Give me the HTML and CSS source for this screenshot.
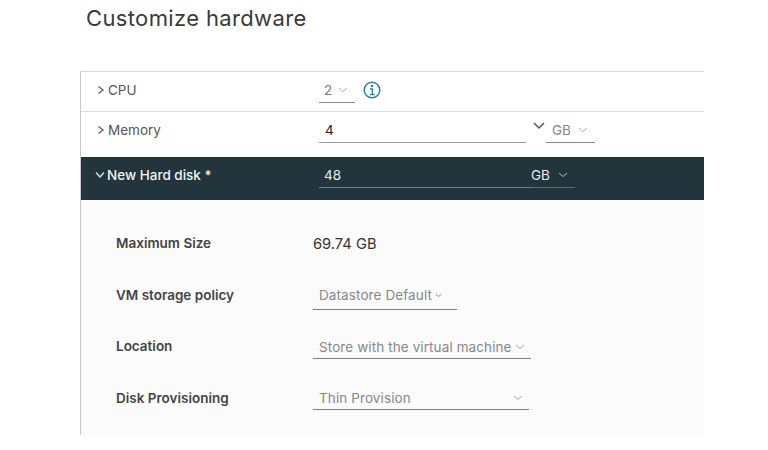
FILE: index.html
```html
<!DOCTYPE html>
<html lang="en">
<head>
<meta charset="utf-8">
<title>Customize hardware</title>
<link rel="stylesheet" href="styles.css">
</head>
<body>
<main class="page">
  <h1 class="title">Customize hardware</h1>
  <section class="panel">
    <div class="row row-cpu">
      <div class="label">
        <svg class="caret" viewBox="0 0 8 10"><path d="M1.5 1.5 6 5 1.5 8.5"/></svg>
        <span>CPU</span>
      </div>
      <div class="select select-cpu"><span>2</span><svg class="chev" viewBox="0 0 10 6"><path d="M1 1l4 3.5L9 1"/></svg></div>
      <svg class="info" viewBox="0 0 20 20"><circle cx="10" cy="10" r="7.8"/><circle class="dot" cx="10" cy="6" r="1.2"/><path d="M8 9h2.4v5.4M7.8 14.6h5"/></svg>
    </div>
    <div class="row row-mem">
      <div class="label">
        <svg class="caret" viewBox="0 0 8 10"><path d="M1.5 1.5 6 5 1.5 8.5"/></svg>
        <span>Memory</span>
      </div>
      <div class="input input-mem">4</div>
      <svg class="spin" viewBox="0 0 12 8"><path d="M1 1l5 5 5-5"/></svg>
      <div class="select select-unit"><span>GB</span><svg class="chev" viewBox="0 0 10 6"><path d="M1 1l4 3.5L9 1"/></svg></div>
    </div>
    <div class="row row-disk">
      <div class="label">
        <svg class="caret-down" viewBox="0 0 10 8"><path d="M1 1.5 5 6l4-4.5"/></svg>
        <span>New Hard disk *</span>
      </div>
      <div class="input input-disk">48</div>
      <div class="select select-disk"><span>GB</span><svg class="chev" viewBox="0 0 10 6"><path d="M1 1l4 3.5L9 1"/></svg></div>
    </div>
    <div class="details">
      <div class="detail detail-size">
        <div class="name">Maximum Size</div>
        <div class="value">69.74 GB</div>
      </div>
      <div class="detail">
        <div class="name">VM storage policy</div>
        <div class="field field-policy"><span>Datastore Default</span><svg class="chev-small" viewBox="0 0 10 6"><path d="M1 1l4 3.5L9 1"/></svg></div>
      </div>
      <div class="detail">
        <div class="name">Location</div>
        <div class="field field-location"><span>Store with the virtual machine</span><svg class="chev" viewBox="0 0 10 6"><path d="M1 1l4 3.5L9 1"/></svg></div>
      </div>
      <div class="detail">
        <div class="name">Disk Provisioning</div>
        <div class="field field-prov"><span>Thin Provision</span><svg class="chev" viewBox="0 0 10 6"><path d="M1 1l4 3.5L9 1"/></svg></div>
      </div>
    </div>
  </section>
</main>
</body>
</html>
```
FILE: styles.css
```css
* { box-sizing: border-box; }
html, body { margin: 0; background: #fff; }
body { width: 768px; height: 450px; overflow: hidden; font-family: Inter, "Liberation Sans", sans-serif; color: #444; }
.page { padding: 4px 64px 0 80px; }
.title { margin: 0 0 38px 6px; height: 29px; font-size: 22px; line-height: 29px; font-weight: 400; color: #3a3a3a; letter-spacing: 0.36px; }
.panel { height: 364px; border-top: 1px solid #d9d9d9; border-left: 1px solid #c8c8c8; display: flex; flex-direction: column; }
.row { display: flex; align-items: flex-start; flex: none; font-size: 13.5px; }
.row-cpu { height: 40px; border-bottom: 1px solid #dcdcdc; }
.row-mem { height: 45px; }
.row-disk { height: 43px; background: #22343c; color: #eef2f3; }
.label { width: 238px; height: 18px; margin-top: 9px; display: flex; align-items: center; padding-left: 16px; color: #555; flex: none; }
.row-disk .label { color: #f1f4f5; padding-left: 14px; font-weight: 500; }
svg { fill: none; stroke: currentColor; flex: none; }
.caret { width: 8px; height: 10px; margin-right: 3px; stroke-width: 1.4; color: #666; }
.caret-down { width: 10px; height: 8px; margin-right: 2px; stroke-width: 1.3; color: #dfe6e8; }
.chev { width: 10px; height: 6px; stroke-width: 1; color: #aaa; }
.chev-small { width: 7px; height: 5px; stroke-width: 1.2; color: #777; margin-left: 3px; }
.select, .input { display: flex; align-items: center; flex: none; height: 23px; margin-top: 8px; padding-bottom: 3px; }
.select-cpu { width: 36px; padding-left: 5px; gap: 6px; border-bottom: 1px solid #888; color: #777; }
.info { width: 20px; height: 20px; margin: 8px 0 0 7px; color: #2f7f9f; stroke-width: 1.5; }
.info .dot { fill: #2f7f9f; stroke: none; }
.info path { stroke-width: 1.4; }
.input-mem { width: 207px; padding-left: 6px; border-bottom: 1px solid #9a9a9a; color: #222; }
.spin { width: 12px; height: 8px; margin: 10px 0 0 7px; color: #555; stroke-width: 1.5; }
.select-unit { width: 49px; margin-left: 1px; padding-left: 6px; gap: 7px; border-bottom: 1px solid #888; color: #888; }
.input-disk { width: 212px; padding-left: 5px; border-bottom: 1px solid #71838a; color: #e8eeef; }
.select-disk { width: 44px; gap: 8px; border-bottom: 1px solid #5b6c73; color: #e8eeef; }
.row-disk .chev { color: #aebcc1; }
.details { flex: 1; background: #fbfbfb; padding-top: 30px; }
.detail { display: flex; height: 51.5px; padding-left: 35px; }
.name { width: 197px; font-size: 13.5px; font-weight: 600; color: #444; line-height: 27px; flex: none; }
.value { font-size: 14.7px; line-height: 29px; color: #333; }
.field { display: flex; align-items: center; justify-content: space-between; margin-top: 4px; padding: 0 6px; border-bottom: 1px solid #7c7c7c; font-size: 13.5px; letter-spacing: 0.1px; color: #888; }
.field-policy { width: 144px; height: 24px; padding-bottom: 4px; justify-content: flex-start; }
.field-location { width: 218px; height: 22px; padding-bottom: 2px; }
.field-prov { width: 216px; height: 21px; padding-bottom: 1px; }
```
